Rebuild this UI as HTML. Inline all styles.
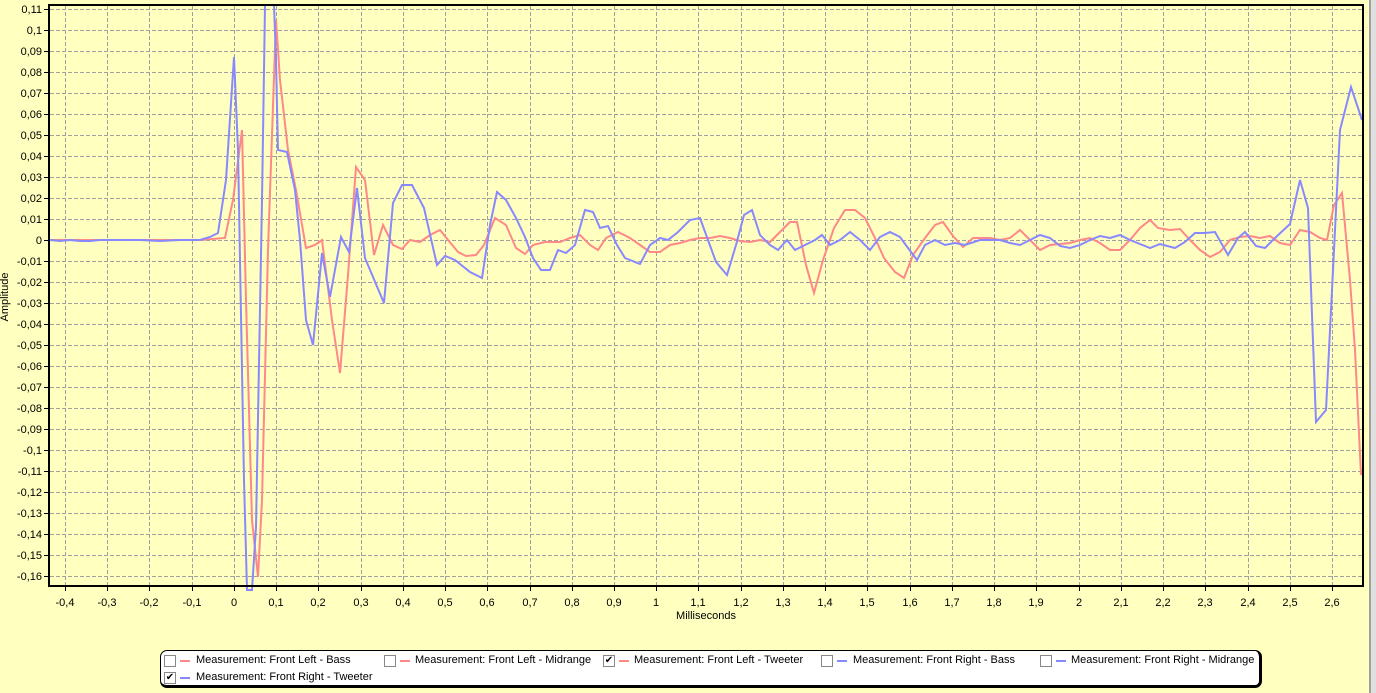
<!DOCTYPE html>
<html><head><meta charset="utf-8"><style>
html,body{margin:0;padding:0;width:1376px;height:693px;overflow:hidden;background:#ffffc0;font-family:"Liberation Sans",Arial,sans-serif}
.lg{position:absolute;left:160px;top:650px;width:1098px;height:34px;background:#fff;border:1px solid #000;border-right:3px solid #000;border-bottom:3px solid #000;border-radius:7px}
.it{position:absolute;font-size:11px;color:#000;white-space:nowrap;line-height:13px}
.cb{position:absolute;width:10px;height:10px;border:1px solid #888;background:#fff;font-size:10px;line-height:10px;text-align:center}
.ln{position:absolute;width:10px;height:2px}
</style></head><body>
<svg width="1376" height="693" style="position:absolute;left:0;top:0" font-family="Liberation Sans, Arial, sans-serif" font-size="11">
<rect x="1369" y="0" width="2" height="693" fill="#a0a0a0"/>
<rect x="1371" y="0" width="5" height="693" fill="#e0e0e0"/>
<g id="grid" stroke="#a0a0a0" stroke-dasharray="4,2" stroke-width="1">
</g>
<g id="lbl"></g>
<polyline fill="none" stroke="#ff8888" stroke-width="2" points="50,240 100,240 150,240 200,240 225,238 233,200 242,130 246,300 252,520 258,577 262,500 268,250 276,20 280,80 288,150 296,190 306,248 315,245 322,240 332,320 340,373 348,275 356,167 365,180 374,255 383,225 393,245 402,249 410,240 420,242 430,235 440,230 448,240 458,252 466,256 476,255 484,245 495,218 506,225 516,248 525,254 533,245 545,242 560,242 570,238 580,235 590,245 598,250 606,238 618,232 630,238 640,245 650,252 660,252 670,245 680,243 690,240 700,238 710,238 720,236 730,238 740,241 750,242 760,240 770,242 780,232 790,222 797,222 806,265 814,293 823,260 834,228 845,210 855,210 865,218 875,238 884,258 895,272 904,278 913,255 925,238 935,225 943,222 953,236 963,247 973,238 990,238 1000,240 1010,238 1020,230 1030,240 1040,250 1050,245 1070,243 1080,240 1090,238 1100,243 1110,250 1120,250 1130,240 1140,228 1150,220 1158,228 1170,230 1180,229 1190,240 1200,250 1210,257 1220,252 1230,240 1240,237 1250,236 1260,238 1270,236 1280,243 1290,245 1300,230 1310,232 1320,238 1327,240 1334,205 1342,193 1350,280 1355,350 1361,475"/>
<polyline fill="none" stroke="#8888ff" stroke-width="2" points="50,240 60,241 70,240 80,241 90,241 100,240 120,240 140,240 160,241 180,240 200,240 210,237 218,233 226,180 234,57 238,150 244,480 247,590 252,590 256,527 262,200 265,5 274,5 276,60 278,150 287,152 295,190 300,240 306,320 313,345 322,253 330,297 341,237 349,252 357,188 365,258 384,303 393,203 402,185 412,185 424,208 437,265 445,256 455,260 470,272 482,278 490,225 497,192 506,200 516,218 525,237 533,258 541,270 550,270 558,250 566,253 575,245 585,210 593,212 600,228 608,226 617,245 625,258 640,264 650,245 660,238 668,240 678,232 690,220 700,218 708,240 716,262 727,275 736,245 744,215 752,210 760,235 770,245 778,250 787,240 795,250 805,245 815,240 822,235 830,245 840,240 850,232 860,240 870,250 880,237 890,232 900,237 908,248 917,260 925,245 935,240 945,245 955,243 965,245 980,240 1000,240 1010,243 1020,245 1030,240 1040,235 1050,238 1060,246 1070,248 1080,245 1090,240 1100,236 1110,238 1120,235 1130,240 1140,244 1150,248 1160,244 1175,248 1185,242 1195,233 1205,233 1215,232 1228,255 1238,238 1245,232 1256,246 1265,248 1275,238 1290,224 1300,180 1308,208 1316,422 1326,410 1340,130 1351,87 1362,120"/>
<rect x="49" y="5" width="1314" height="581" fill="none" stroke="#000" stroke-width="2"/>
<rect x="0" y="0" width="48" height="5" fill="#ffffc0"/>
<text x="8" y="297" transform="rotate(-90 8 297)" text-anchor="middle" font-size="11">Amplitude</text>
<text x="706" y="619" text-anchor="middle">Milliseconds</text>
</svg>
<script>
var g=document.getElementById('grid'),l=document.getElementById('lbl'),ns='http://www.w3.org/2000/svg';
function mk(p,t,a,txt){var e=document.createElementNS(ns,t);for(var k in a)e.setAttribute(k,a[k]);if(txt!=null)e.textContent=txt;p.appendChild(e);}
for(var k=0;k<=27;k++){var y=9+21*k,v=(11-k)/100;mk(g,'line',{x1:50,x2:1362,y1:y+0.5,y2:y+0.5});mk(l,'line',{x1:44,x2:48,y1:y+0.5,y2:y+0.5,stroke:'#000'});
var s=(v===0)?'0':(v<0?'-':'')+String(Math.abs(v).toFixed(2)).replace(/0+$/,'').replace('.',',');mk(l,'text',{x:42,y:y+4,'text-anchor':'end'},s);}
for(var k=0;k<=30;k++){var x=Math.round(65+42.233*k),v=(k-4)/10;mk(g,'line',{x1:x+0.5,x2:x+0.5,y1:6,y2:585});mk(l,'line',{x1:x+0.5,x2:x+0.5,y1:587,y2:591,stroke:'#000'});
var s=(v===0)?'0':(v<0?'-':'')+Math.abs(v).toFixed(1).replace('.',',');if(Math.abs(v-Math.round(v))<1e-9&&v!==0)s=String(Math.round(v));mk(l,'text',{x:x,y:606,'text-anchor':'middle'},s);}
</script>
<div class="lg"></div>
<div class="cb" style="left:164px;top:655px"></div><div class="ln" style="left:180px;top:660px;background:#ff8888"></div><div class="it" style="left:196px;top:654px">Measurement: Front Left - Bass</div>
<div class="cb" style="left:384px;top:655px"></div><div class="ln" style="left:400px;top:660px;background:#ff8888"></div><div class="it" style="left:415px;top:654px">Measurement: Front Left - Midrange</div>
<div class="cb" style="left:603px;top:655px">✔</div><div class="ln" style="left:619px;top:660px;background:#ff8888"></div><div class="it" style="left:634px;top:654px">Measurement: Front Left - Tweeter</div>
<div class="cb" style="left:821px;top:655px"></div><div class="ln" style="left:837px;top:660px;background:#8888ff"></div><div class="it" style="left:853px;top:654px">Measurement: Front Right - Bass</div>
<div class="cb" style="left:1040px;top:655px"></div><div class="ln" style="left:1056px;top:660px;background:#8888ff"></div><div class="it" style="left:1071px;top:654px">Measurement: Front Right - Midrange</div>
<div class="cb" style="left:164px;top:672px">✔</div><div class="ln" style="left:180px;top:677px;background:#8888ff"></div><div class="it" style="left:196px;top:671px">Measurement: Front Right - Tweeter</div>
</body></html>
